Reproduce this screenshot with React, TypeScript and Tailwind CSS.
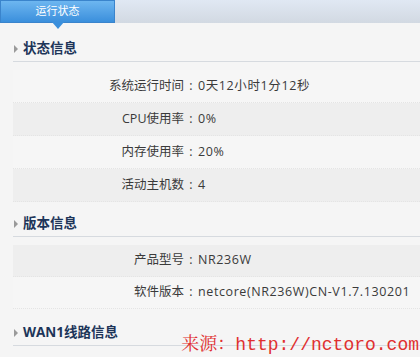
import React from 'react'

type Item = { label: string; value: string }

const statusItems: Item[] = [
  { label: '系统运行时间', value: '0天12小时1分12秒' },
  { label: 'CPU使用率', value: '0%' },
  { label: '内存使用率', value: '20%' },
  { label: '活动主机数', value: '4' },
]

const versionItems: Item[] = [
  { label: '产品型号', value: 'NR236W' },
  { label: '软件版本', value: 'netcore(NR236W)CN-V1.7.130201' },
]

const font = { fontFamily: '"Open Sans", "Noto Sans CJK SC", sans-serif' }

const SectionHeader = ({ title }: { title: string }) => (
  <div className="ml-[13px] flex h-[26px] items-center border-b border-[#d6dadf]">
    <span className="ml-[1px] mr-[5px] h-0 w-0 border-y-[4px] border-l-[4px] border-y-transparent border-l-[#9a9a9a]" />
    <span className="text-[13.5px] font-bold text-[#1d3559]">{title}</span>
  </div>
)

const Rows = ({ items, first, h }: { items: Item[]; first: 'light' | 'gray'; h: string }) => (
  <div className="mt-2 ml-[13px]">
    {items.map((item, i) => {
      const gray = (i % 2 === 0) === (first === 'gray')
      return (
        <div
          key={item.label}
          className={`flex items-center text-[12.5px] text-[#3a3a3a] border-b border-dotted border-[#e4e4e4] ${h} ${
            gray ? 'bg-[#eeeeee]' : 'bg-[#f6f6f6]'
          }`}
        >
          <span className="w-[171px] text-right">{item.label}</span>
          <span className="w-[14px] text-center">:</span>
          <span className="text-[12.5px] tracking-[0.6px]">{item.value}</span>
        </div>
      )
    })}
  </div>
)

export default function App() {
  return (
    <div className="relative h-[357px] w-[420px] overflow-hidden bg-[#f5f5f5]" style={font}>
      <div className="relative h-[23px] bg-gradient-to-b from-[#e0e8f3] to-[#d2d9e2]">
        <div className="relative flex h-[23px] w-[115px] items-center justify-center border border-[#3a84cc] bg-gradient-to-b from-[#6db6f0] to-[#3a8fdc] text-[11px] text-white">
          运行状态
          <span className="absolute left-[51px] top-[21px] h-0 w-0 border-x-[6px] border-t-[7px] border-x-transparent border-t-[#3a8fdc]" />
        </div>
      </div>

      <div className="mt-[13px]">
        <SectionHeader title="状态信息" />
        <Rows items={statusItems} first="light" h="h-[33px]" />
      </div>

      <div className="mt-[9px]">
        <SectionHeader title="版本信息" />
        <Rows items={versionItems} first="gray" h="h-[32px]" />
      </div>

      <div className="mt-[11px]">
        <SectionHeader title="WAN1线路信息" />
      </div>

      <div
        className="absolute right-[1px] top-[334px] text-[18px] leading-[22px] text-[#e03030]"
        style={{ fontFamily: '"Liberation Mono", "Noto Serif CJK SC", "Noto Sans CJK SC", monospace' }}
      >
        来源：http://nctoro.com
      </div>
    </div>
  )
}
